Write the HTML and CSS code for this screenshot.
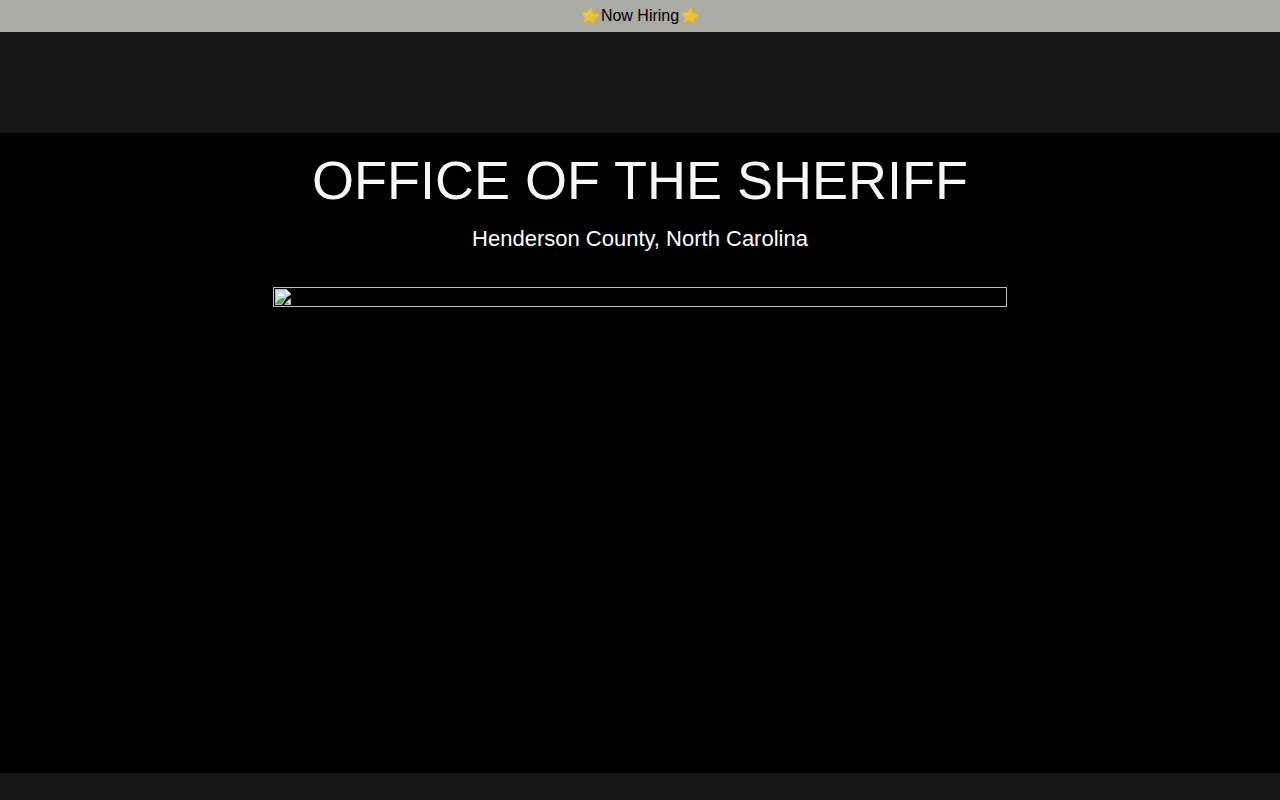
FILE: index.html
```html
<!DOCTYPE html>
<html lang="en">
<head>
<meta charset="utf-8">
<title>Office of the Sheriff</title>
<link rel="stylesheet" href="styles.css">
</head>
<body>
<svg class="defs" aria-hidden="true">
<symbol id="star" viewBox="0 0 18 18">
<g transform="rotate(6 9 9)">
<path d="M8 1.500Q9 .2 9.900 1.500L12 5.800l4.500.4q1.600.5.6 1.800l-3.400 3.300 1.100 4.600q-.1 1.500-1.500.9L9 14.600l-4.400 2.500q-1.400.2-1.300-1.200l.9-4.600L.9 8Q0 6.700 1.400 6.200L6 5.700z" fill="#efc233"/>
<path d="M8.700 2.500L7 6.700l-4.500.8 4.300.5z" fill="#f9dc68"/>
<path d="M13.300 11.200l1.500 4.700q-.1 1.500-1.500.9L9 14.600l-4.400 2.500q-1.400.2-1.300-1.200L9 13.300l4.200 1.900z" fill="#e2ac2d"/>
</g>
</symbol>
</svg>
<a class="banner" href="#"><svg class="star" aria-hidden="true"><use href="#star"/></svg><span>Now Hiring</span><svg class="star" aria-hidden="true"><use href="#star"/></svg></a>
<header class="header"></header>
<main class="hero">
<h1 class="title">OFFICE OF THE SHERIFF</h1>
<p class="subtitle">Henderson County, North Carolina</p>
<div class="picture">
<svg class="broken" viewBox="0 0 16 16" aria-hidden="true">
<path d="M0 0h11l5 5v1l-4 2-5 8H0z" fill="#b5b9bd"/>
<path d="M1 1h10l4 4-4 3-5 7H1z" fill="#c5d8f7"/>
<path d="M3 7q-.5-2 1.500-2.200Q6 2.700 7.500 5 9.500 5 9 7z" fill="#fff"/>
<path d="M1 14q3-5 8-5l1 1-4 5H1z" fill="#58a943"/>
<path d="M11 0v5h5z" fill="#eef0f2"/>
<path d="M16 9v7H9l3-4z" fill="#b5b9bd"/>
<path d="M15 11v4h-4l2-3z" fill="#d8e8dc"/>
<path d="M11 15l2-2 1 2z" fill="#58a943"/>
</svg>
</div>
</main>
</body>
</html>
```
FILE: styles.css
```css
* { box-sizing: border-box; }
body { margin: 0; background: #171717; color: #fff; font-family: "Liberation Sans", Arial, sans-serif; }
.defs { display: none; }
.banner { display: flex; justify-content: center; align-items: center; gap: 2px; line-height: 32px; background: #a9aba4; color: #000; font-size: 16px; text-decoration: none; }
.star { width: 18px; height: 18px; }
.header { height: 101px; }
.hero { min-height: 640px; padding-top: 16px; background: #000; text-align: center; }
.title { margin: 0; color: #f7f7f7; font-size: 54px; line-height: 62px; font-weight: 400; }
.subtitle { margin: 10px 0 0; font-size: 22px; line-height: 36px; }
.picture { display: flex; width: 734px; max-width: 100%; height: 20px; margin: 30px auto 0; padding: 1px; border: 1px solid #c0c0c0; }
.broken { width: 16px; height: 16px; }
```
